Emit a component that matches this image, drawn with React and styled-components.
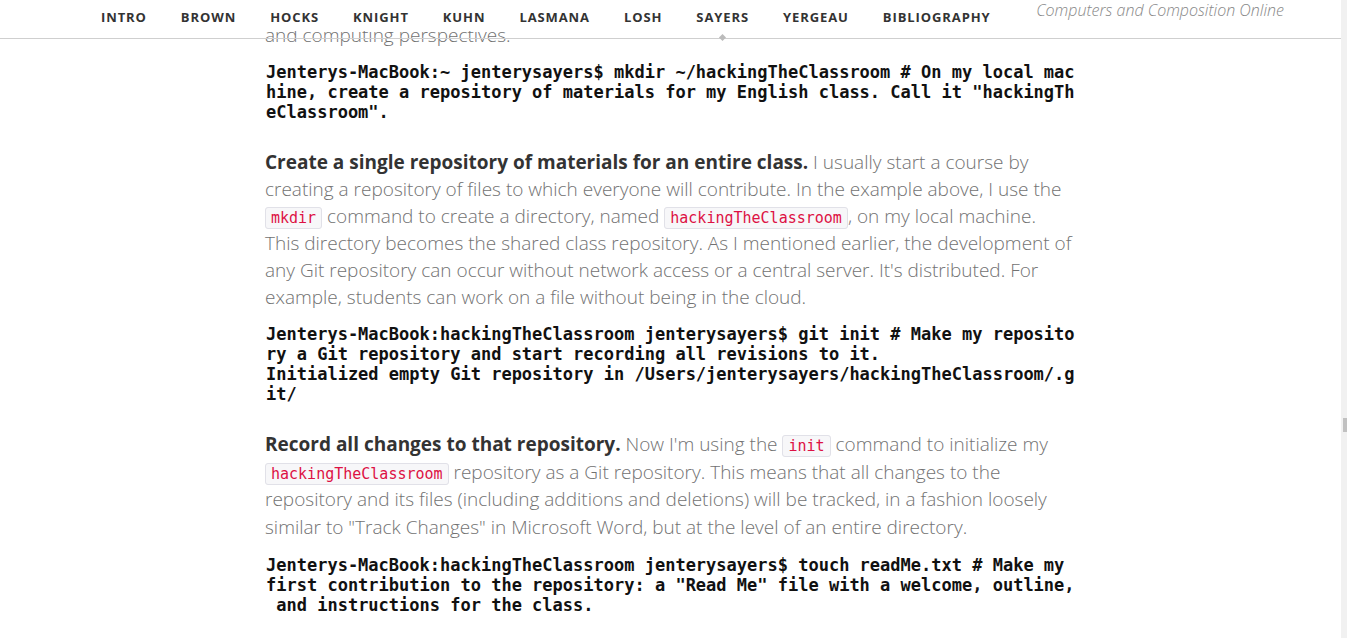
import React from 'react'
import styled, { createGlobalStyle } from 'styled-components'

const GlobalStyle = createGlobalStyle`
    html, body {
        margin: 0;
        padding: 0;
        background: #fff;
        overflow: hidden;
    }
`

const navItems = ['Intro', 'Brown', 'Hocks', 'Knight', 'Kuhn', 'Lasmana', 'Losh', 'Sayers', 'Yergeau', 'Bibliography']

const Page = styled.div`
    display: flex;
    height: 638px;
    overflow: hidden;
`

const Main = styled.div`
    flex: 1;
    position: relative;
    min-width: 0;
`

const Header = styled.header`
    position: absolute;
    top: 0;
    left: 0;
    right: 0;
    height: 38px;
    display: flex;
    align-items: flex-start;
    background: linear-gradient(#fff 0, #fff 31px, transparent 31px);
    border-bottom: 1px solid #cfcfcf;
    z-index: 2;
`

const Nav = styled.nav`
    display: flex;
    padding-left: 84px;
`

const NavItem = styled.a`
    position: relative;
    padding: 10px 17px 0;
    font-family: 'Open Sans', sans-serif;
    font-weight: 700;
    font-size: 13px;
    letter-spacing: 0.9px;
    text-transform: uppercase;
    white-space: nowrap;
    color: #333;
    text-decoration: none;
    line-height: 15px;

    ${props => props.active && `
        &::after {
            content: '';
            position: absolute;
            left: 50%;
            top: 35px;
            width: 5px;
            height: 5px;
            margin-left: -3px;
            background: #bbb;
            transform: rotate(45deg);
        }
    `}
`

const Brand = styled.div`
    margin-left: auto;
    margin-right: 57px;
    font-family: 'Open Sans', sans-serif;
    font-style: italic;
    font-weight: 300;
    font-size: 16px;
    line-height: 20px;
    white-space: nowrap;
    color: #888;
`

const Content = styled.main`
    width: 812px;
    margin-left: 265px;
    padding-top: 22px;
`

const Para = styled.p`
    max-width: 807px;
    margin: 0 0 13px;
    font-family: 'Open Sans', sans-serif;
    font-weight: 300;
    font-size: 19px;
    line-height: ${props => props.loose ? '27.7px' : '27px'};
    color: #727272;

    strong {
        font-weight: 700;
        color: #333;
    }
`

const Pre = styled.pre`
    margin: 0 0 27px;
    padding: 0 0 0 1px;
    font-family: 'DejaVu Sans Mono', monospace;
    font-weight: 700;
    font-size: 17px;
    line-height: 20px;
    color: #111;
    white-space: pre-wrap;
    word-break: break-all;
`

const Code = styled.code`
    padding: 1px 5px;
    font-family: 'DejaVu Sans Mono', monospace;
    font-size: 15px;
    line-height: 1;
    color: #dd1144;
    background: #f7f7f9;
    border: 1px solid #e1e1e8;
    border-radius: 3px;
`

const Track = styled.div`
    width: 6px;
    background: #f1f1f1;
    display: flex;
    flex-direction: column;
`

const Thumb = styled.div`
    margin-top: 418px;
    margin-left: 2px;
    height: 14px;
    background: #c1c1c1;
`

export default function App() {
    return (
        <>
            <GlobalStyle />
            <Page>
                <Main>
                    <Header>
                        <Nav>
                            {navItems.map(item => (
                                <NavItem key={item} href="#" active={item === 'Sayers' ? 1 : 0}>
                                    {item}
                                </NavItem>
                            ))}
                        </Nav>
                        <Brand>Computers and Composition Online</Brand>
                    </Header>
                    <Content>
                        <Para>and computing perspectives.</Para>
                        <Pre>Jenterys-MacBook:~ jenterysayers$ mkdir ~/hackingTheClassroom # On my local machine, create a repository of materials for my English class. Call it "hackingTheClassroom".</Pre>
                        <Para>
                            <strong>Create a single repository of materials for an entire class.</strong> I usually start a
                            course by creating a repository of files to which everyone will contribute. In the example above,
                            I use the <Code>mkdir</Code> command to create a directory, named <Code>hackingTheClassroom</Code>,
                            on my local machine. This directory becomes the shared class repository. As I mentioned earlier,
                            the development of any Git repository can occur without network access or a central server. It's
                            distributed. For example, students can work on a file without being in the cloud.
                        </Para>
                        <Pre>Jenterys-MacBook:hackingTheClassroom jenterysayers$ git init # Make my repository a Git repository and start recording all revisions to it.{'\n'}Initialized empty Git repository in /Users/jenterysayers/hackingTheClassroom/.git/</Pre>
                        <Para loose={1}>
                            <strong>Record all changes to that repository.</strong> Now I'm using the <Code>init</Code> command
                            to initialize my <Code>hackingTheClassroom</Code> repository as a Git repository. This means that
                            all changes to the repository and its files (including additions and deletions) will be tracked,
                            in a fashion loosely similar to "Track Changes" in Microsoft Word, but at the level of an entire
                            directory.
                        </Para>
                        <Pre>Jenterys-MacBook:hackingTheClassroom jenterysayers$ touch readMe.txt # Make my first contribution to the repository: a "Read Me" file with a welcome, outline,{'\n'} and instructions for the class.</Pre>
                    </Content>
                </Main>
                <Track>
                    <Thumb />
                </Track>
            </Page>
        </>
    )
}
